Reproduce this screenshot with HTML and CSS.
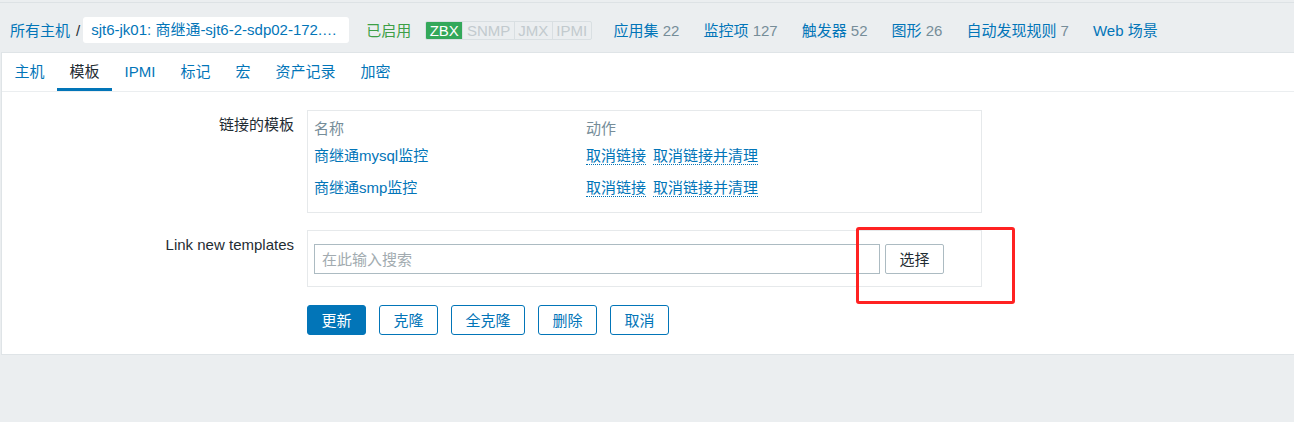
FILE: index.html
```html
<!DOCTYPE html>
<html lang="zh-CN">
<head>
<meta charset="utf-8">
<title>主机模板</title>
<link rel="stylesheet" href="styles.css">
</head>
<body>
<header class="page-header">
  <nav class="breadcrumbs">
    <a class="crumb-link" href="#">所有主机</a>
    <span class="crumb-sep">/</span>
    <span class="crumb-current">sjt6-jk01: 商继通-sjt6-2-sdp02-172.…</span>
  </nav>
  <span class="status-on">已启用</span>
  <div class="avail">
    <span class="avail-item avail-on">ZBX</span>
    <span class="avail-item">SNMP</span>
    <span class="avail-item">JMX</span>
    <span class="avail-item">IPMI</span>
  </div>
  <ul class="obj-links">
    <li><a href="#">应用集</a> <span class="count">22</span></li>
    <li><a href="#">监控项</a> <span class="count">127</span></li>
    <li><a href="#">触发器</a> <span class="count">52</span></li>
    <li><a href="#">图形</a> <span class="count">26</span></li>
    <li><a href="#">自动发现规则</a> <span class="count">7</span></li>
    <li><a href="#">Web 场景</a></li>
  </ul>
</header>

<main class="panel">
  <ul class="tabs">
    <li class="tab"><a href="#">主机</a></li>
    <li class="tab tab-active"><a href="#">模板</a></li>
    <li class="tab"><a href="#">IPMI</a></li>
    <li class="tab"><a href="#">标记</a></li>
    <li class="tab"><a href="#">宏</a></li>
    <li class="tab"><a href="#">资产记录</a></li>
    <li class="tab"><a href="#">加密</a></li>
  </ul>

  <div class="form">
    <div class="form-label">链接的模板</div>
    <div class="form-field linked-box">
      <div class="lt-grid">
        <div class="lt-head">名称</div>
        <div class="lt-head">动作</div>
        <div class="lt-cell lt-row1"><a href="#">商继通mysql监控</a></div>
        <div class="lt-cell lt-row1 lt-actions"><a class="dotted" href="#">取消链接</a><a class="dotted" href="#">取消链接并清理</a></div>
        <div class="lt-cell lt-row2"><a href="#">商继通smp监控</a></div>
        <div class="lt-cell lt-row2 lt-actions"><a class="dotted" href="#">取消链接</a><a class="dotted" href="#">取消链接并清理</a></div>
      </div>
    </div>

    <div class="form-label">Link new templates</div>
    <div class="form-field new-box">
      <input class="search-input" type="text" placeholder="在此输入搜索">
      <button class="btn-grey" type="button">选择</button>
    </div>

    <div class="form-label"></div>
    <div class="form-buttons">
      <button class="btn btn-primary" type="button">更新</button>
      <button class="btn" type="button">克隆</button>
      <button class="btn" type="button">全克隆</button>
      <button class="btn" type="button">删除</button>
      <button class="btn" type="button">取消</button>
    </div>
  </div>
</main>

<div class="annotation"></div>
</body>
</html>
```

FILE: styles.css
```css
* { box-sizing: border-box; }

html, body {
  margin: 0;
  padding: 0;
  background: #ebeef0;
  font-family: "Liberation Sans", "Noto Sans CJK SC", sans-serif;
  font-size: 15px;
  line-height: 17px;
  color: #1f2c33;
}

a { color: #0275b8; text-decoration: none; }

ul { list-style: none; margin: 0; padding: 0; }

/* Header */
.page-header {
  margin-top: 2px;
  border-top: 1px solid #dde2e5;
  display: flex;
  align-items: center;
  padding: 14px 0 9px 10px;
  height: 50px;
  white-space: nowrap;
}

.breadcrumbs { display: flex; align-items: center; }
.crumb-sep { margin: 0 3px 0 6px; color: #1f2c33; }
.crumb-current {
  display: block;
  width: 266px;
  height: 26px;
  line-height: 26px;
  padding: 0 8px;
  background: #fff;
  border-radius: 3px;
  color: #0275b8;
  overflow: hidden;
}

.status-on { margin-left: 17px; color: #3d9f46; }

.avail {
  display: flex;
  margin-left: 14px;
  height: 19px;
  border: 1px solid #d9dfe2;
  border-radius: 2px;
  overflow: hidden;
}
.avail-item {
  padding: 0 3.5px;
  line-height: 17px;
  color: #c2cace;
  border-left: 1px solid #d9dfe2;
}
.avail-item:first-child { border-left: none; }
.avail-on { background: #33a85a; color: #fff; }

.obj-links { display: flex; margin-left: 22px; gap: 24px; }
.count { color: #768d99; }

/* Panel */
.panel {
  margin-left: 1px;
  background: #fff;
  border-top: 1px solid #dfe4e7;
  border-left: 1px solid #dfe4e7;
  border-bottom: 1px solid #dfe4e7;
  padding-bottom: 19px;
}

.tabs {
  display: flex;
  border-bottom: 1px solid #ebeef0;
}
.tab a {
  display: block;
  padding: 10px 12.5px 8px;
  border-bottom: 3px solid transparent;
}
.tab-active a {
  color: #1f2c33;
  border-bottom-color: #0275b8;
}

/* Form */
.form {
  display: grid;
  grid-template-columns: 292px 675px;
  column-gap: 13px;
  row-gap: 17px;
  margin-top: 18px;
}
.form-label {
  text-align: right;
  padding-top: 6px;
  white-space: nowrap;
}
.form-field { border: 1px solid #e6e9eb; }

.linked-box { padding: 9px 6px 15px; }
.lt-grid {
  display: grid;
  grid-template-columns: 272px auto;
}
.lt-head { color: #768d99; height: 17px; }
.lt-row1 { margin-top: 10px; height: 18px; }
.lt-row2 { margin-top: 14px; height: 18px; }
.lt-actions { display: flex; gap: 7px; }
.dotted {
  display: inline-block;
  border-bottom: 1px dotted #0275b8;
}

.new-box {
  display: flex;
  align-items: center;
  padding: 13px 6px 12px;
}
.search-input {
  width: 566px;
  height: 30px;
  border: 1px solid #acbbc2;
  border-radius: 0;
  padding: 0 7px;
  font: inherit;
  color: #1f2c33;
  outline: none;
}
.search-input::placeholder { color: #a2abb0; }
.btn-grey {
  margin-left: 5px;
  width: 59px;
  height: 30px;
  background: #fff;
  border: 1px solid #acbbc2;
  border-radius: 2px;
  font: inherit;
  color: #1f2c33;
  padding: 0;
}

.form-buttons {
  display: flex;
  gap: 13px;
  margin-top: 1px;
}
.btn {
  height: 30px;
  padding: 0 13.5px;
  background: #fff;
  color: #0275b8;
  border: 1px solid #0275b8;
  border-radius: 3px;
  font: inherit;
}
.btn-primary { background: #0275b8; color: #fff; }

/* Screenshot annotation overlay */
.annotation {
  position: absolute;
  left: 856px;
  top: 227px;
  width: 159px;
  height: 77px;
  border: 3px solid #ff2222;
  border-radius: 3px;
}
```
